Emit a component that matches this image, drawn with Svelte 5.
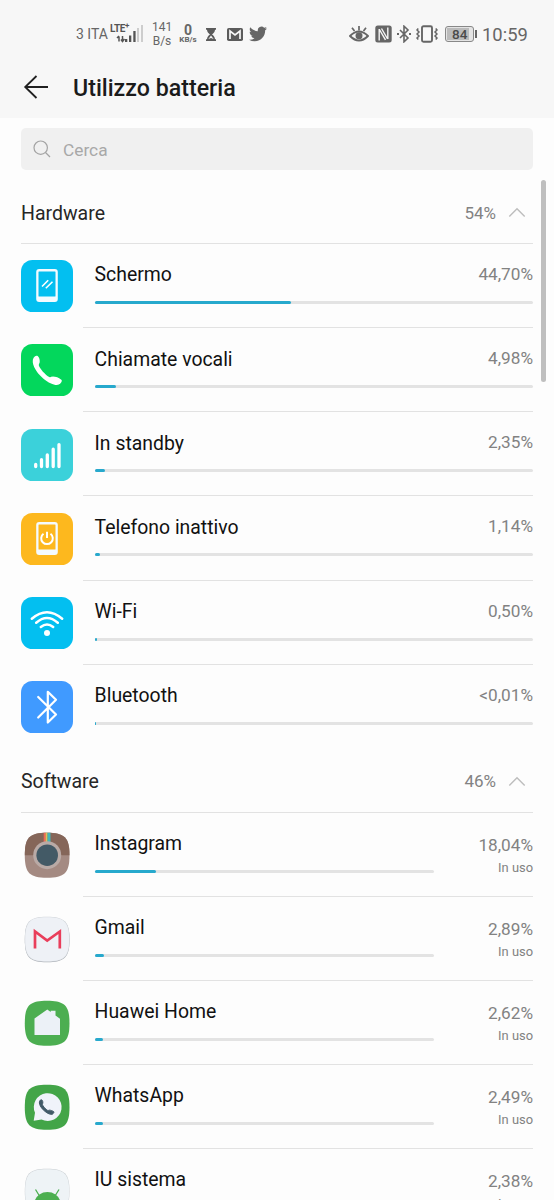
<script>
  const sections = [
    {
      name: 'Hardware',
      total: '54%',
      rows: [
        { icon: 'screen', name: 'Schermo', value: '44,70%', bar: 44.7 },
        { icon: 'call', name: 'Chiamate vocali', value: '4,98%', bar: 4.98 },
        { icon: 'standby', name: 'In standby', value: '2,35%', bar: 2.35 },
        { icon: 'idle', name: 'Telefono inattivo', value: '1,14%', bar: 1.14 },
        { icon: 'wifi', name: 'Wi-Fi', value: '0,50%', bar: 0.6 },
        { icon: 'bluetooth', name: 'Bluetooth', value: '<0,01%', bar: 0.15 }
      ]
    },
    {
      name: 'Software',
      total: '46%',
      rows: [
        { icon: 'instagram', name: 'Instagram', value: '18,04%', bar: 18.04, status: 'In uso' },
        { icon: 'gmail', name: 'Gmail', value: '2,89%', bar: 2.89, status: 'In uso' },
        { icon: 'home', name: 'Huawei Home', value: '2,62%', bar: 2.62, status: 'In uso' },
        { icon: 'whatsapp', name: 'WhatsApp', value: '2,49%', bar: 2.49, status: 'In uso' },
        { icon: 'android', name: 'IU sistema', value: '2,38%', bar: 2.38, status: 'In uso' }
      ]
    }
  ];

  const tiles = {
    screen: '#03bff0',
    call: '#03d75c',
    standby: '#3bd1da',
    idle: '#fdb81e',
    wifi: '#03bff0',
    bluetooth: '#409aff'
  };

  // rounded "squircle" shared by the app icons
  const squircle = 'M26 3.8C43.500 3.800 48.500 8.500 48.500 26.200S43.500 48.700 26 48.700S3.800 43.900 3.800 26.200S8.500 3.800 26 3.800Z';
  const handset = 'M12.600 13.800C14 11.700 15.500 11.200 16.700 12.100C18.300 13.500 19 16.200 18.700 18.300C18.500 19.600 17.700 20 17.800 21.200C18.300 24.200 24.800 31.300 28.300 33C29.700 33.600 30.300 32.600 31.800 32.500C34.400 32.600 38.200 33.600 40.700 35.900C41.300 37.400 39.600 39.400 37.800 40.600C34.500 41.900 28.300 39.500 22.200 34.400C14.500 28 9.700 18.800 12.600 13.800Z';
</script>

<div class="screen">
  <header>
    <div class="status">
      <span class="carrier">3 ITA</span>
      <div class="network">
        <span class="lte">LTE<sup>+</sup></span>
        <svg class="signal" width="32" height="18" viewBox="0 0 32 18">
          <path d="M7 16.500V11.500M5 13L7 11M10.500 11V16M9 14.500L10.500 16.500L12.500 14" stroke="#555" stroke-width="1.500" fill="none" />
          <path d="M13 14h2.300v3H13zM17 10.500h2.300V17H17zM21.300 6h2.300v11h-2.300z" fill="#555" />
          <path d="M25 3h2v14h-2zM29 0h2v17h-2z" fill="#cdcdcd" />
        </svg>
      </div>
      <div class="rate">141<br />B/s</div>
      <div class="speed"><b>0</b><small>KB/s</small></div>
      <svg class="hourglass" width="10" height="13" viewBox="0 0 10 13">
        <path d="M0 0h10v1.800H9C9 4 7.500 5.500 6 6.500C7.500 7.500 9 9 9 11.200h1V13H0v-1.800h1C1 9 2.500 7.500 4 6.500C2.500 5.500 1 4 1 1.800H0z" fill="#5b5b5b" />
        <path d="M5 7.500L7.600 11L5 10L2.400 11z" fill="#f7f7f7" />
      </svg>
      <svg class="mail" width="16" height="13" viewBox="0 0 16 13">
        <rect width="16" height="13" rx="1.800" fill="#5b5b5b" />
        <path d="M3 11V3L8 7L13 3V11" fill="none" stroke="#f7f7f7" stroke-width="1.700" />
      </svg>
      <svg class="bird" width="18" height="18" viewBox="0 0 24 24">
        <path fill="#666" d="M23.950 4.570a10 10 0 0 1-2.820.770 4.960 4.960 0 0 0 2.160-2.720c-.950.550-2 .950-3.130 1.180a4.920 4.920 0 0 0-8.380 4.480C7.690 8.090 4.070 6.130 1.640 3.160a4.820 4.820 0 0 0-.670 2.480c0 1.710.870 3.210 2.190 4.100a4.900 4.900 0 0 1-2.230-.620v.060a4.920 4.920 0 0 0 3.950 4.830 5 5 0 0 1-2.210.080 4.940 4.940 0 0 0 4.600 3.420A9.870 9.870 0 0 1 0 19.540a13.990 13.990 0 0 0 7.550 2.210c9.050 0 14-7.500 14-13.980 0-.210 0-.420-.020-.630a9.940 9.940 0 0 0 2.460-2.550z" />
      </svg>

      <svg class="eye" width="20" height="18" viewBox="0 0 20 18">
        <path d="M1 11Q10 2 19 11Q10 20 1 11Z" fill="none" stroke="#666" stroke-width="1.900" />
        <circle cx="10" cy="10.700" r="3.500" fill="#666" />
        <path d="M10 1v4.500M3 2.800L5.500 6M17 2.800L14.500 6" stroke="#666" stroke-width="1.700" />
      </svg>
      <svg class="nfc" width="17" height="18" viewBox="0 0 17 18">
        <rect x=".3" y=".5" width="16.400" height="17" rx="2.500" fill="#666" />
        <path d="M4.200 4V15.500M12.800 2.500V14M6.500 3.500L12.600 14M4.400 4.500L10.500 14.800" fill="none" stroke="#f7f7f7" stroke-width="1.400" />
      </svg>
      <svg class="bt" width="14" height="18" viewBox="0 0 14 18">
        <path d="M3 5L11 13L7 16.800V1.200L11 5L3 13" fill="none" stroke="#666" stroke-width="1.600" />
        <path d="M0 8h2v2H0zM12 8h2v2h-2z" fill="#666" />
      </svg>
      <svg class="vibrate" width="22" height="18" viewBox="0 0 22 18">
        <rect x="6" y="1.200" width="10" height="15.600" rx="1.500" fill="none" stroke="#666" stroke-width="1.900" />
        <path d="M2.300 3.500L1 5L3 7L1 9L3 11L1 13L2.300 14.500M19.700 3.500L21 5L19 7L21 9L19 11L21 13L19.700 14.500" fill="none" stroke="#666" stroke-width="1.500" />
      </svg>
      <div class="battery"><span>84</span></div>
      <span class="clock">10:59</span>
    </div>

    <div class="titlebar">
      <svg width="26" height="26" viewBox="0 0 26 26">
        <path d="M13.500 2L2.200 13L13.500 24M2.200 13H25" fill="none" stroke="#202020" stroke-width="1.800" />
      </svg>
      <h1>Utilizzo batteria</h1>
    </div>
  </header>

  <div class="search">
    <svg width="18" height="18" viewBox="0 0 18 18">
      <circle cx="7.700" cy="7.700" r="6.700" fill="none" stroke="#a3a3a3" stroke-width="1.200" />
      <path d="M12.500 12.500L17 17" stroke="#a3a3a3" stroke-width="1.200" />
    </svg>
    <span>Cerca</span>
  </div>

  <div class="scrollbar"></div>

  {#each sections as section}
    <section>
      <div class="section-head">
        <h2>{section.name}</h2>
        <span class="total">{section.total}</span>
        <svg width="18" height="11" viewBox="0 0 18 11">
          <path d="M1.300 9.500L9 1.800L16.700 9.500" fill="none" stroke="#bdbdbd" stroke-width="1.400" />
        </svg>
      </div>
      {#each section.rows as row}
        <div class="row" class:app={row.status}>
          <svg class="icon" width="52" height="52" viewBox="0 0 52 52">
            {#if tiles[row.icon]}
              <rect width="52" height="52" rx="11.500" fill={tiles[row.icon]} />
            {/if}
            {#if row.icon === 'screen' || row.icon === 'idle'}
              <rect x="15.200" y="9" width="21.600" height="33" rx="3" fill="#f4fbff" />
              <rect x="17.500" y="11.500" width="17" height="25" rx=".5" fill={tiles[row.icon]} />
              {#if row.icon === 'screen'}
                <path d="M21 26.500L27.200 20.200M24.800 28.200L31.500 21.700" stroke="#fff" stroke-width="1.600" />
              {:else}
                <path d="M22.500 20.700A5.800 5.800 0 1 0 29.500 20.700M26 18.800V25" fill="none" stroke="#fff" stroke-width="2" />
              {/if}
            {:else if row.icon === 'call'}
              <path d={handset} fill="#fff" />
            {:else if row.icon === 'standby'}
              <path d="M14.700 35.500V37.500M20.500 30.700V37.500M26.300 26V37.500M32.200 20.200V37.500M38 15.600V37.500" stroke="#fff" stroke-width="3.300" stroke-linecap="round" fill="none" />
            {:else if row.icon === 'wifi'}
              <path d="M10.800 21.700Q26 8.700 41.200 21.700M15.200 25.800Q26 16.300 36.800 25.800M19.800 30Q26 25 32.200 30" fill="none" stroke="#fff" stroke-width="2.500" stroke-linecap="round" />
              <circle cx="26" cy="36" r="3" fill="#fff" />
            {:else if row.icon === 'bluetooth'}
              <path d="M17.200 16L35 33.500L26.800 41.500V10.800L35 18.800L17.200 36.500" fill="none" stroke="#fff" stroke-width="2.200" stroke-linecap="round" stroke-linejoin="round" />
            {:else if row.icon === 'instagram'}
              <path d={squircle} fill="#a48a82" />
              <path d="M3.800 26.200C3.800 8.500 8.500 3.800 26 3.800S48.500 8.500 48.500 26.200Z" fill="#856659" />
              <path d="M22.700 3.800h2.200V14h-2.200z" fill="#ee6a55" />
              <path d="M24.700 3.800h1.900V14h-1.900z" fill="#d6c65c" />
              <path d="M26.500 3.800h3V14h-3z" fill="#43b7b9" />
              <circle cx="26.200" cy="26.200" r="14" fill="#b9aaa6" />
              <circle cx="26.200" cy="26.200" r="10.800" fill="#435a66" />
            {:else if row.icon === 'gmail'}
              <path d={squircle} fill="#a9aeb4" transform="translate(0 .5)" />
              <path d={squircle} fill="#d3d7dc" />
              <path d={squircle} fill="#eef1f6" transform="translate(.5 .5) scale(.981)" />
              <path d="M14 35.500V18.500L26.200 27.500L38.800 18.500V35.500" fill="none" stroke="#e93e5b" stroke-width="2.700" />
            {:else if row.icon === 'home'}
              <path d={squircle} fill="#4cae51" />
              <path d="M13.500 38V21.500L26.300 12.500L29.700 15V13.800H34.500V18.500L39 21.700V38Z" fill="#ecf1f7" />
            {:else if row.icon === 'whatsapp'}
              <path d={squircle} fill="#43a548" />
              <path d="M12.700 39.800L14 31.700A13.900 13.900 0 1 1 20.500 38.500Z" fill="#f0f3fa" />
              <path d={handset} fill="#425a68" transform="translate(12.500 12.900) scale(.5)" stroke="#425a68" stroke-width="2" />
            {:else if row.icon === 'android'}
              <path d={squircle} fill="#c9ced2" />
              <path d={squircle} fill="#eef3f6" transform="translate(.4 .4) scale(.985)" />
              <path d="M13.700 36a13.200 12 0 0 1 25.500 0V52H13.700Z" fill="#4caf50" />
              <path d="M14.500 24.500L18.500 31M38 24.500L34 31" stroke="#4caf50" stroke-width="1.300" />
            {/if}
          </svg>
          <div class="body">
            <div class="info">
              <div class="name">{row.name}</div>
              <div class="track"><div class="fill" style="width: {row.bar}%"></div></div>
            </div>
            <div class="usage">
              <div class="value">{row.value}</div>
              {#if row.status}
                <div class="state">{row.status}</div>
              {/if}
            </div>
          </div>
        </div>
      {/each}
    </section>
  {/each}
</div>

<style>
  :global(body) {
    background: #fdfdfd;
    overflow: hidden;
  }

  .screen {
    position: relative;
    width: 554px;
    height: 1200px;
    overflow: hidden;
    background: #fdfdfd;
    font-family: Roboto, sans-serif;
  }

  svg {
    display: block;
    flex: none;
  }

  header {
    height: 118px;
    background: #f7f7f7;
  }

  .status {
    display: flex;
    align-items: center;
    height: 68px;
    padding-left: 76px;
    color: #666;
    white-space: nowrap;
  }

  .carrier {
    width: 34px;
    font-size: 14px;
  }

  .network {
    display: flex;
    flex-direction: column;
    width: 34px;
    height: 20px;
  }

  .lte {
    font-size: 10px;
    font-weight: 700;
    line-height: 10px;
    letter-spacing: -0.4px;
    color: #555;
  }

  .lte sup {
    font-size: 8px;
    line-height: 0;
  }

  .signal {
    margin-top: -9px;
    margin-left: 2px;
  }

  .rate {
    width: 20px;
    margin-left: 8px;
    font-size: 12px;
    line-height: 14px;
    text-align: center;
  }

  .speed {
    display: flex;
    flex-direction: column;
    align-items: center;
    width: 20px;
    margin-left: 6px;
  }

  .speed b {
    font-size: 14px;
    line-height: 12px;
  }

  .speed small {
    font-size: 8px;
    font-weight: 700;
    line-height: 8px;
  }

  .hourglass {
    margin-left: 8px;
  }

  .mail {
    margin-left: 11px;
  }

  .bird {
    margin-left: 6px;
  }

  .eye {
    margin-left: 82px;
  }

  .nfc {
    margin-left: 6px;
  }

  .bt {
    margin-left: 5px;
  }

  .vibrate {
    margin-left: 5px;
  }

  .battery {
    position: relative;
    box-sizing: border-box;
    width: 29px;
    height: 16px;
    margin-left: 7px;
    padding: 1px;
    border: 1px solid #888;
    border-radius: 3px;
    background: #e4e4e4;
  }

  .battery::after {
    content: '';
    position: absolute;
    top: 3px;
    right: -4px;
    width: 2px;
    height: 8px;
    background: #666;
  }

  .battery span {
    display: block;
    width: 22px;
    padding-left: 5px;
    box-sizing: border-box;
    background: #bbb;
    color: #4a4a4a;
    font-size: 13.5px;
    font-weight: 500;
    line-height: 12px;
  }

  .clock {
    margin-left: 8px;
    font-size: 18.4px;
  }

  .titlebar {
    display: flex;
    align-items: center;
    height: 38px;
    padding-left: 23px;
  }

  h1 {
    margin: 2px 0 0 24px;
    color: #1b1b1b;
    font-size: 23.2px;
    font-weight: 500;
  }

  .search {
    display: flex;
    align-items: center;
    height: 42px;
    margin: 10px 21px 10.2px;
    padding-left: 12px;
    box-sizing: border-box;
    border-radius: 5px;
    background: #f0f0f0;
    color: #a8a8a8;
    font-size: 17.3px;
  }

  .search span {
    margin: 2px 0 0 12px;
  }

  .scrollbar {
    position: absolute;
    top: 180px;
    right: 8px;
    width: 5px;
    height: 202px;
    border-radius: 3px;
    background: #bfbfbf;
  }

  .section-head {
    display: flex;
    align-items: center;
    box-sizing: border-box;
    height: 64px;
    margin: 0 21px;
    padding-right: 7px;
    border-bottom: 1px solid #e2e2e2;
  }

  h2 {
    flex: 1;
    margin: 3px 0 0;
    color: #262626;
    font-size: 19.5px;
    font-weight: 400;
  }

  .total {
    margin: 2px 12px 0 0;
    color: #828282;
    font-size: 17px;
  }

  .section-head svg {
    margin-top: 2px;
  }

  .row {
    display: flex;
    height: 84.1px;
    padding: 0 21px;
  }

  .icon {
    margin: 16.2px 10px 0 0;
  }

  .body {
    display: flex;
    flex: 1;
    box-sizing: border-box;
    padding-left: 11.6px;
    border-bottom: 1px solid #e2e2e2;
  }

  .row:last-child .body {
    border-bottom: none;
  }

  .info {
    flex: 1;
  }

  .name {
    margin-top: 18.3px;
    color: #111;
    font-size: 19.4px;
    line-height: 26px;
    white-space: nowrap;
  }

  .track {
    width: 438.4px;
    height: 3px;
    margin-top: 12.7px;
    border-radius: 2px;
    background: #e3e3e3;
  }

  .app .track {
    width: 339.4px;
  }

  .fill {
    height: 3px;
    border-radius: 2px;
    background: #27a9cd;
  }

  .usage {
    width: 0;
    padding-top: 19px;
    color: #828282;
    white-space: nowrap;
    display: flex;
    flex-direction: column;
    align-items: flex-end;
  }

  .app .usage {
    padding-top: 21px;
  }

  .value {
    font-size: 17.2px;
    line-height: 22px;
  }

  .state {
    margin-top: 3px;
    font-size: 12.9px;
    line-height: 18px;
  }
</style>
